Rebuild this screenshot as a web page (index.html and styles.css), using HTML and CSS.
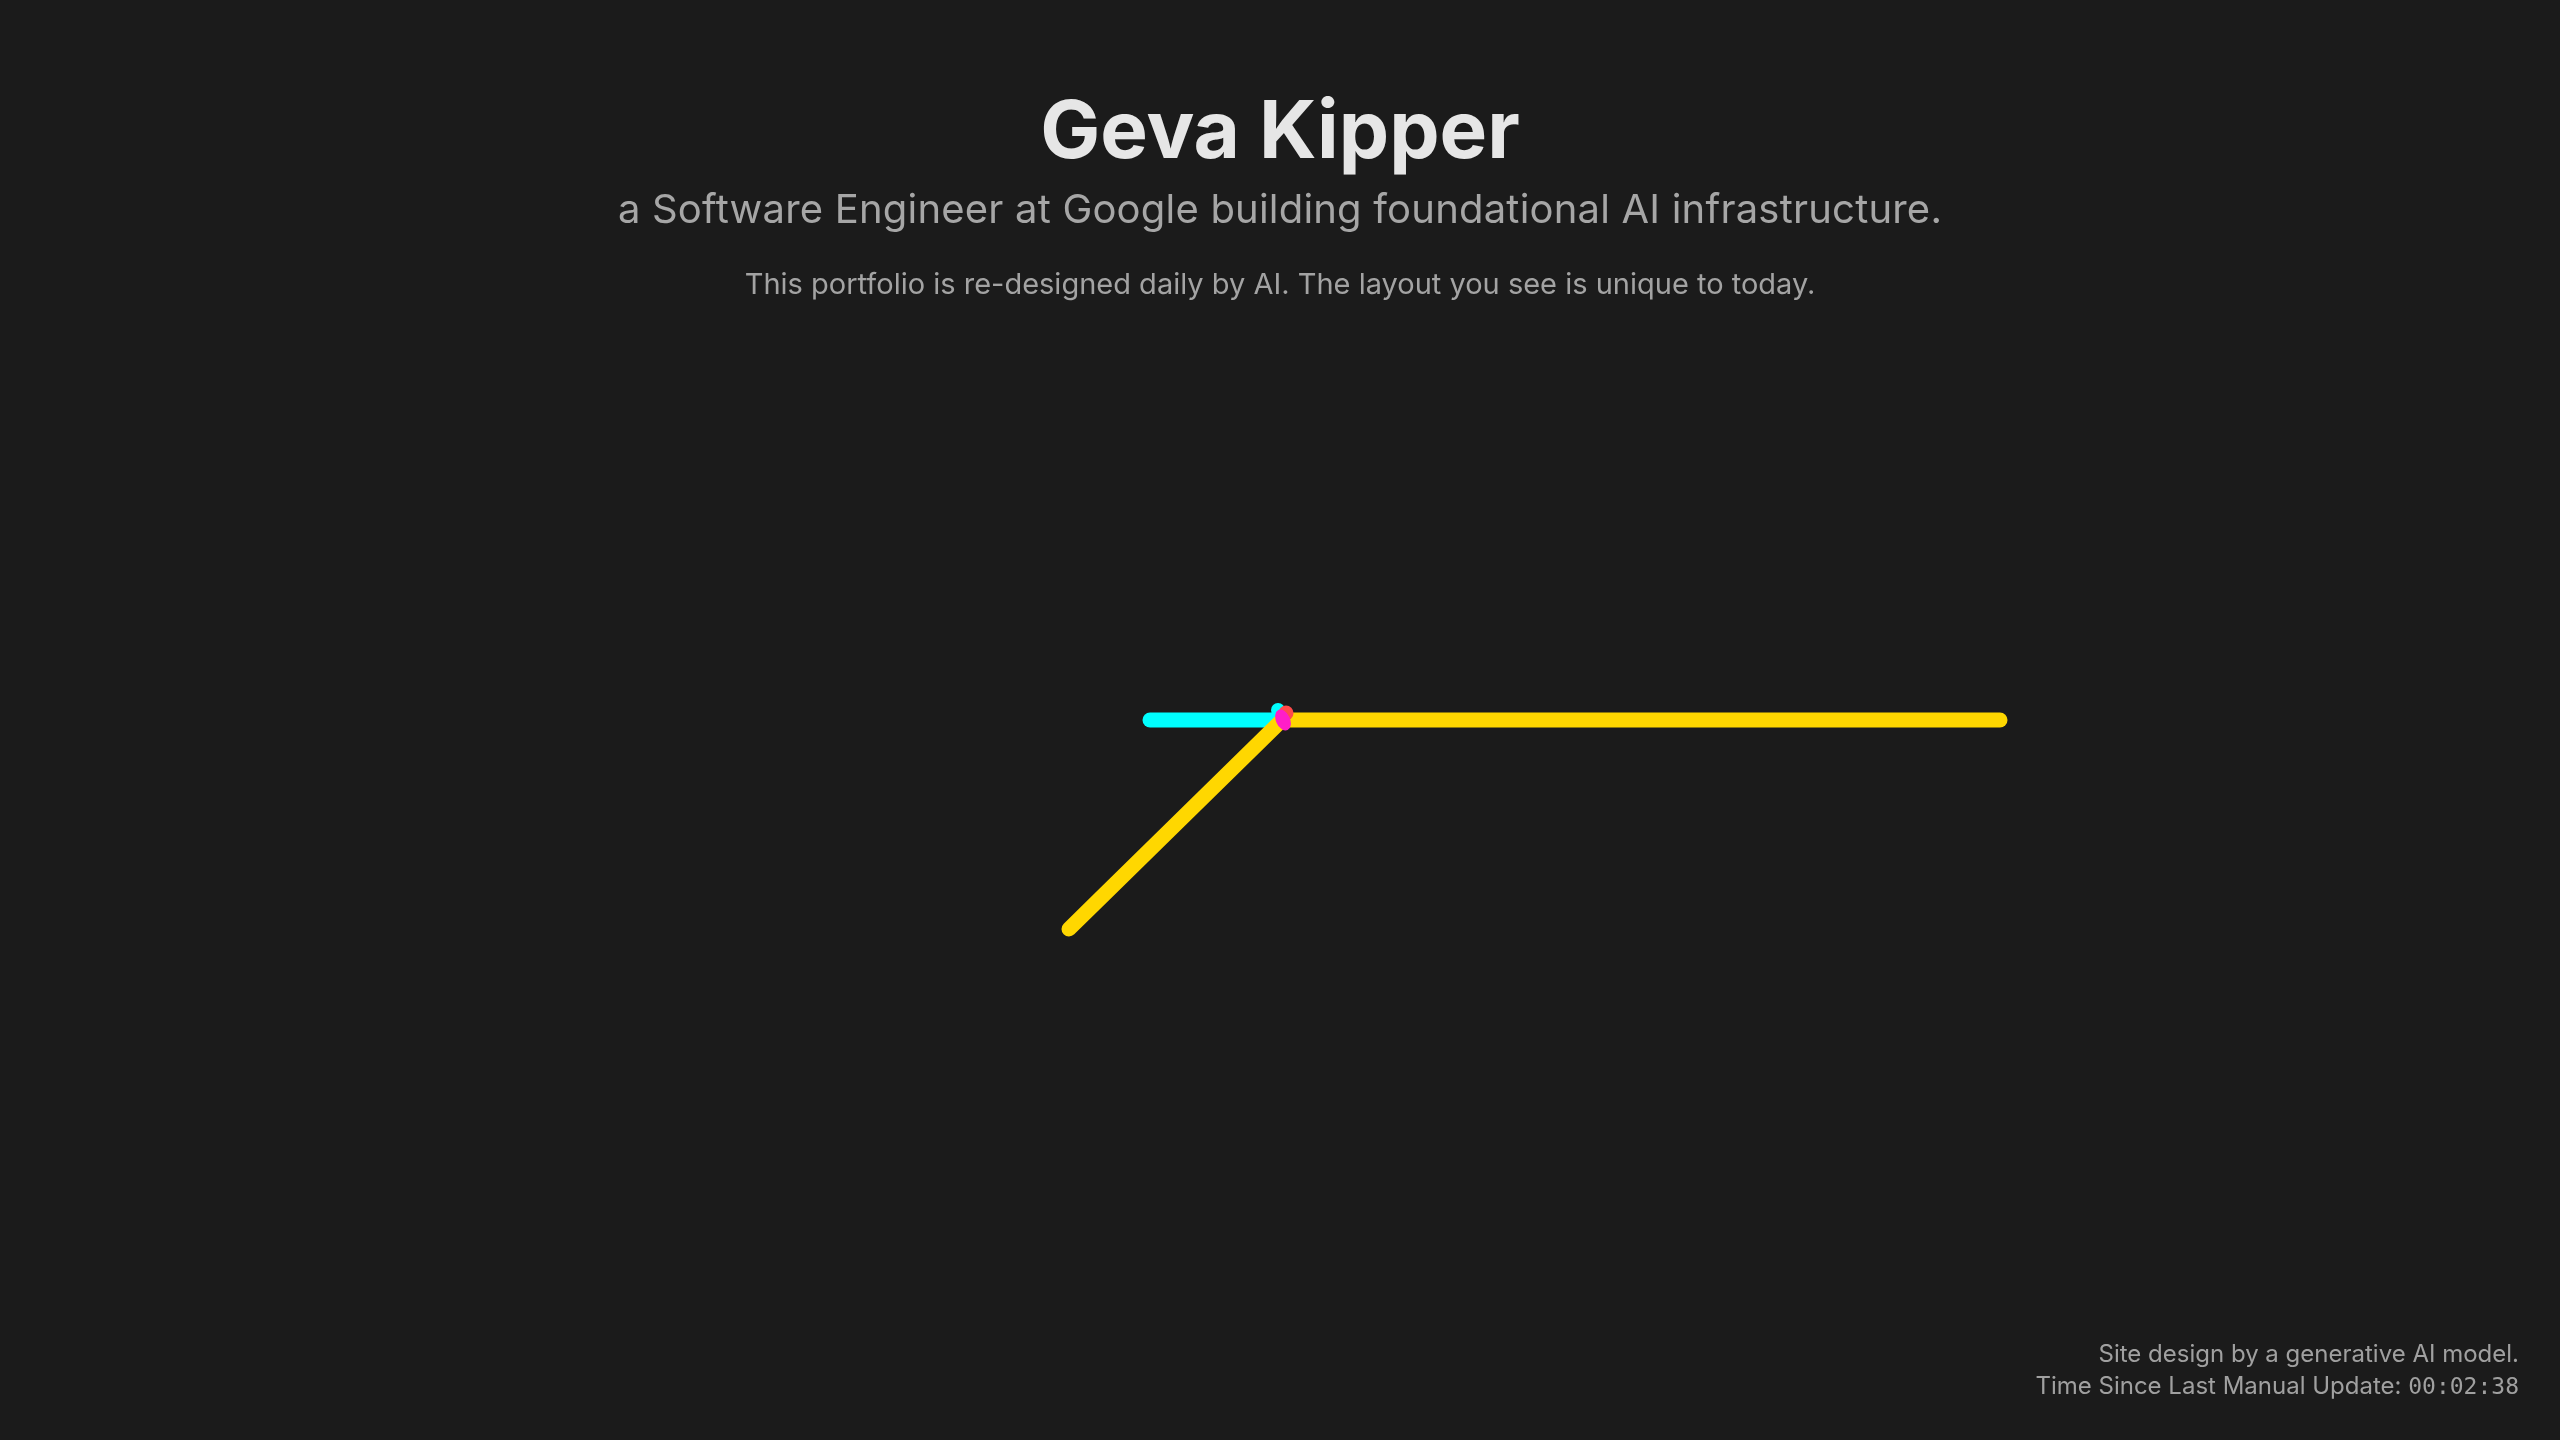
FILE: index.html
```html
<!DOCTYPE html>
<html lang="en">
<head>
<meta charset="utf-8">
<title>Geva Kipper</title>
<link rel="stylesheet" href="styles.css">
</head>
<body>
<svg class="canvas" viewBox="0 0 2560 1440" preserveAspectRatio="none" aria-hidden="true">
  <g stroke-linecap="round" fill="none" stroke-width="15">
    <line x1="1150" y1="720" x2="1280" y2="720" stroke="#00ffff"/>
    <line x1="1282" y1="720" x2="2000" y2="720" stroke="#ffd700"/>
    <line x1="1282" y1="720" x2="1069" y2="929" stroke="#ffd700"/>
  </g>
  <circle cx="1278" cy="710" r="7" fill="#00ffff"/>
  <circle cx="1286" cy="713" r="7.5" fill="#ff4b4b"/>
  <ellipse cx="1283" cy="720" rx="7" ry="11" transform="rotate(-25 1283 720)" fill="#ff1ec8"/>
</svg>
<header class="header">
  <h1 class="title">Geva Kipper</h1>
  <p class="subtitle">a Software Engineer at Google building foundational AI infrastructure.</p>
  <p class="note">This portfolio is re-designed daily by AI. The layout you see is unique to today.</p>
</header>
<footer class="footer">
  <div>Site design by a generative AI model.</div>
  <div>Time Since Last Manual Update: <span class="timer">00:02:38</span></div>
</footer>
</body>
</html>
```
FILE: styles.css
```css
html, body {
  margin: 0;
  padding: 0;
  height: 100%;
}
body {
  background: #1b1b1b;
  font-family: Inter, "Noto Sans", sans-serif;
  display: flex;
  flex-direction: column;
  min-height: 100vh;
  overflow: hidden;
}
.canvas {
  position: fixed;
  inset: 0;
  width: 100%;
  height: 100%;
  z-index: 0;
}
.header {
  position: relative;
  z-index: 1;
  display: flex;
  flex-direction: column;
  align-items: center;
  padding-top: 89px;
  text-align: center;
}
.title {
  margin: 0;
  font-size: 80px;
  line-height: 80px;
  font-weight: 700;
  color: #e6e6e6;
}
.subtitle {
  margin: 16px 0 0;
  font-size: 40px;
  line-height: 48px;
  letter-spacing: 0.2px;
  color: #a6a6a6;
}
.note {
  margin: 33.5px 0 0;
  font-size: 29px;
  line-height: 34.8px;
  color: #a3a3a3;
}
.footer {
  position: relative;
  z-index: 1;
  margin-top: auto;
  align-self: flex-end;
  text-align: right;
  padding: 0 41px 38px 0;
  font-size: 24px;
  line-height: 31.5px;
  color: #a0a0a0;
}
.timer {
  font-family: "DejaVu Sans Mono", monospace;
  font-size: 23px;
}
```
